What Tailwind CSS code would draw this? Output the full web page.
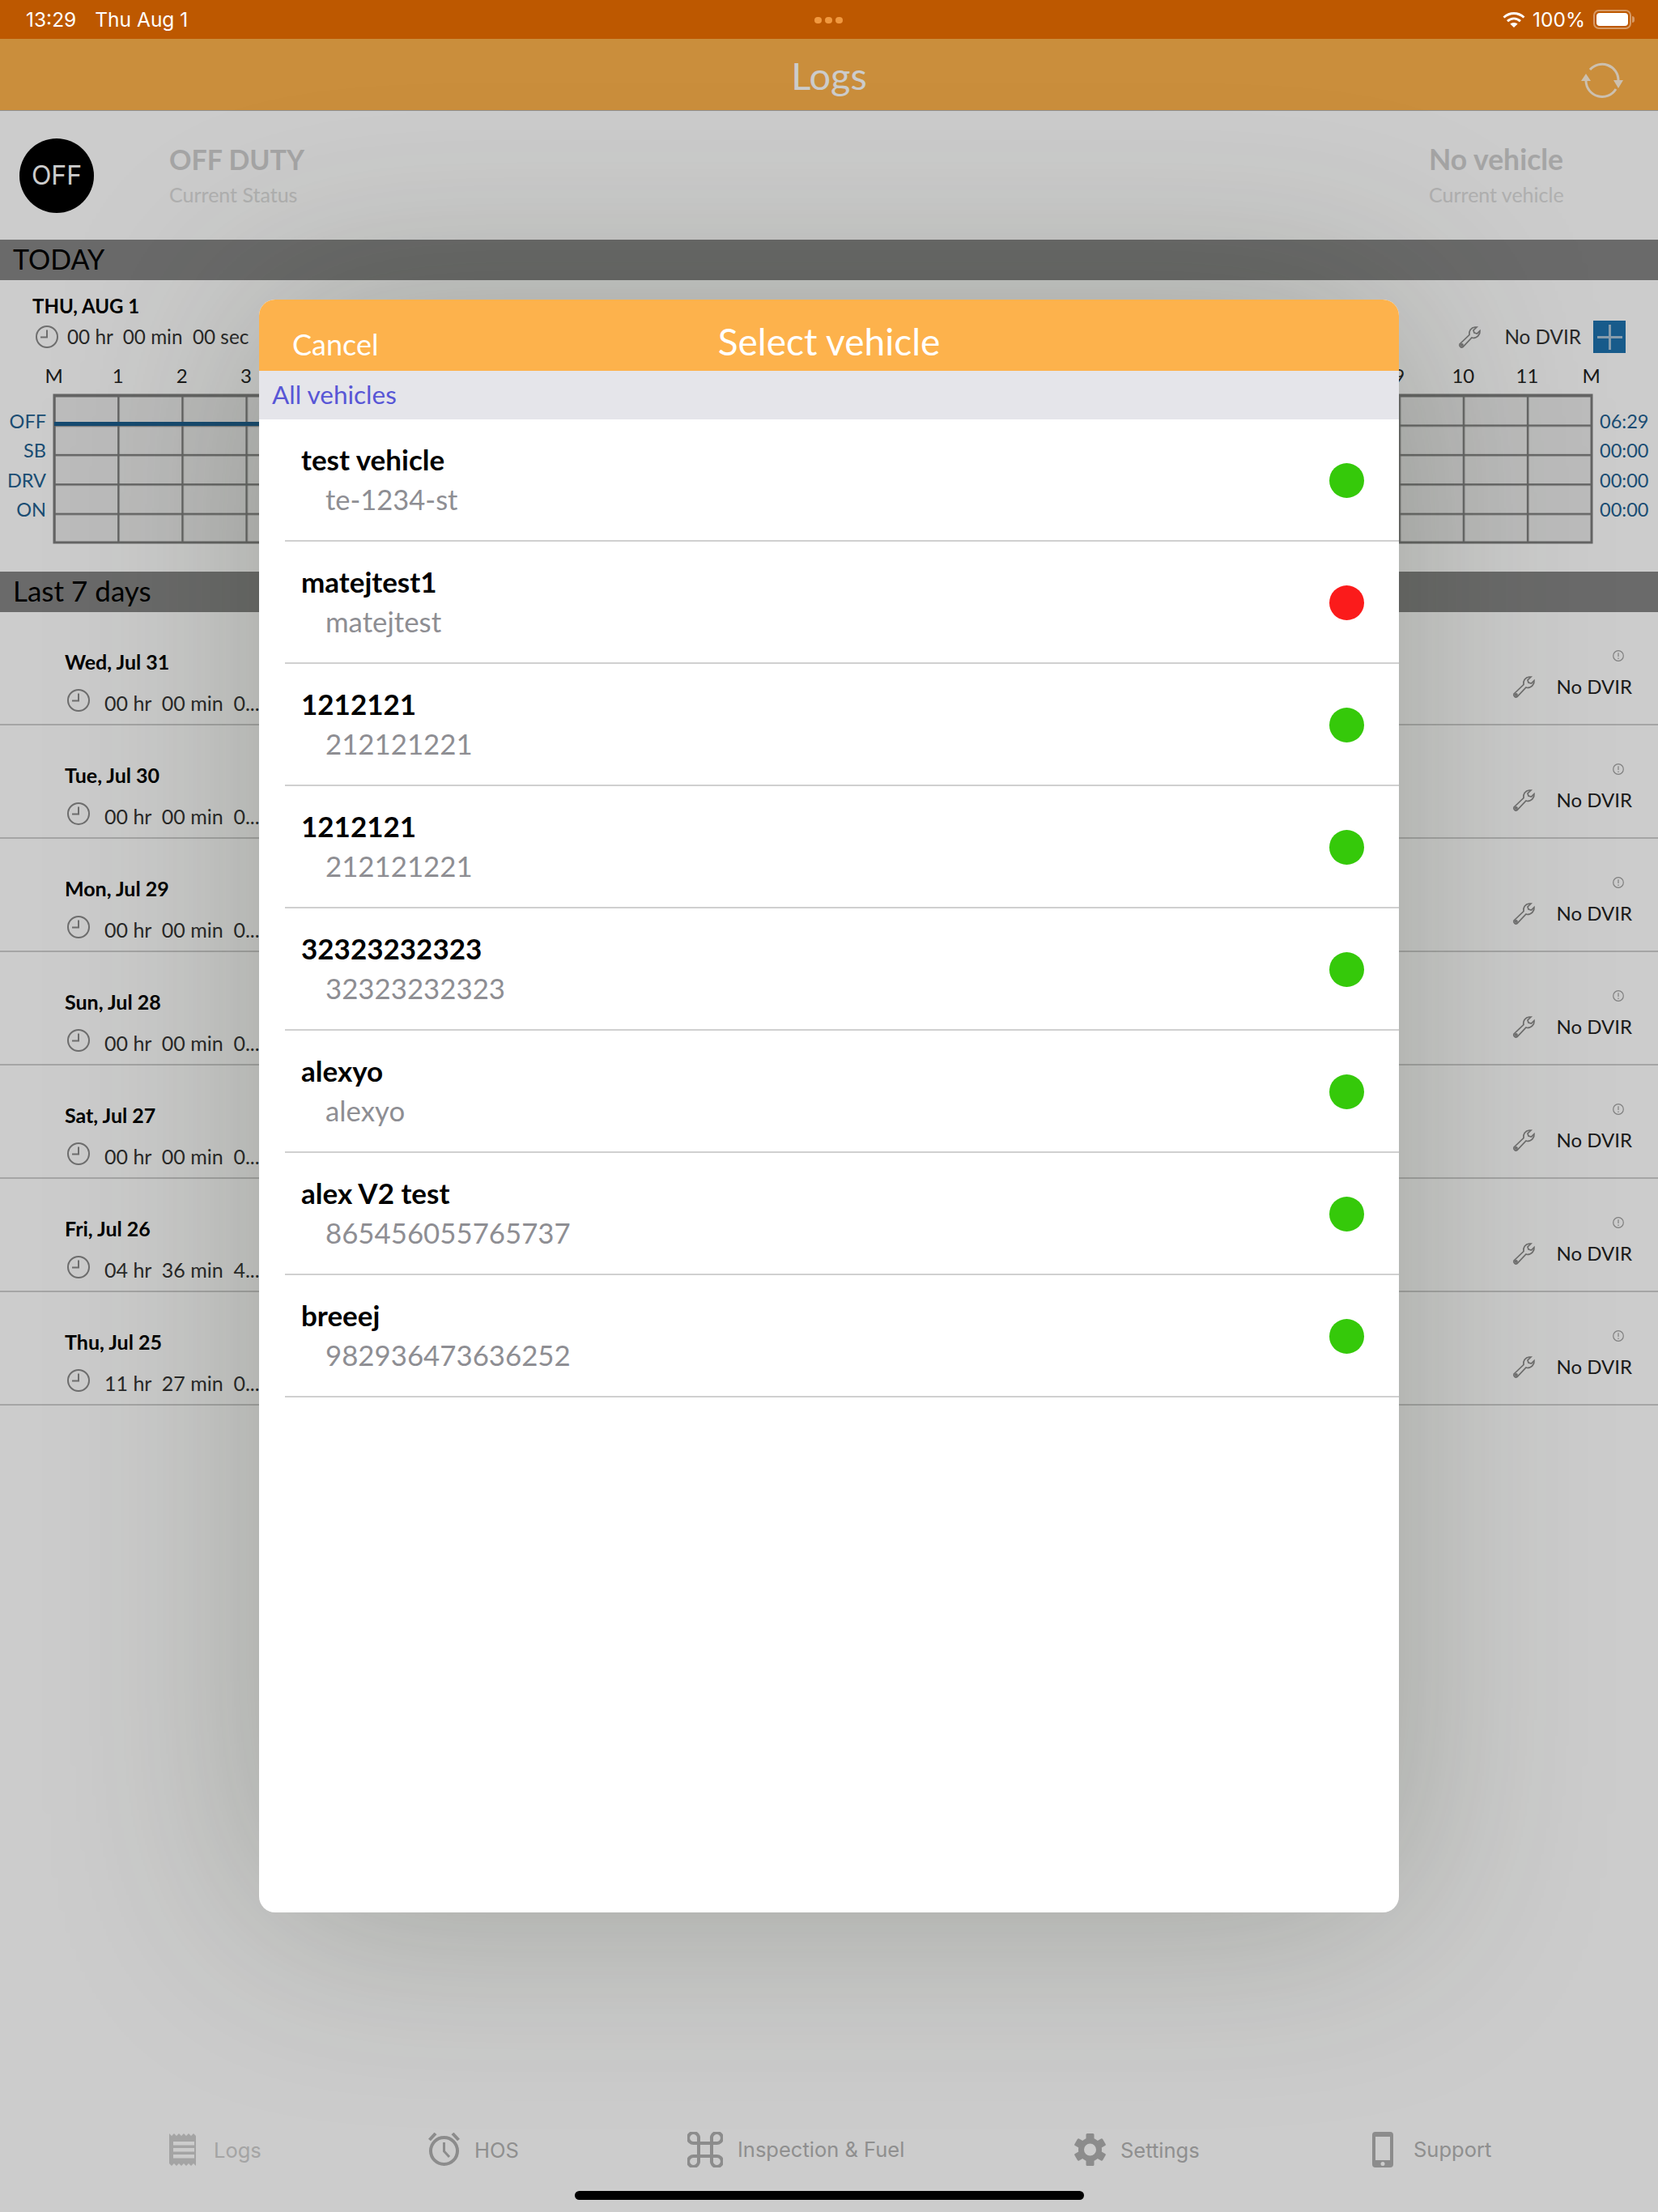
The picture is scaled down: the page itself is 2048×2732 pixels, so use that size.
<!DOCTYPE html>
<html>
<head>
<meta charset="utf-8">
<script src="https://cdn.jsdelivr.net/npm/@tailwindcss/browser@4"></script>
</head>
<body class="m-0">
<div class="relative w-[2048px] h-[2732px] overflow-hidden bg-white flex flex-col font-['Lato',sans-serif] text-black">

  <!-- status bar -->
  <div class="relative z-30 h-[48px] bg-[#bd5800] flex items-center text-white font-['Inter',sans-serif] text-[24.500px] pl-[32px] pr-[33px]">
    <span>13:29</span><span class="ml-[23px]">Thu Aug 1</span>
    <div class="absolute left-[1006px] top-[21px] flex gap-[4px]">
      <span class="w-[9px] h-[8px] rounded-full bg-[#f0983f]"></span><span class="w-[9px] h-[8px] rounded-full bg-[#f0983f]"></span><span class="w-[9px] h-[8px] rounded-full bg-[#f0983f]"></span>
    </div>
    <div class="ml-auto flex items-center">
      <svg width="28" height="20" viewBox="0 0 28 20" fill="none" stroke="white" stroke-width="3"><path d="M1.500 7.500C9 .8 19 .8 26.500 7.500"/><path d="M6 12.200c5-4.300 11-4.300 16 0"/><path d="M14 20l-4.600-4.600c2.800-2 6.400-2 9.200 0z" fill="white" stroke="none"/></svg>
      <span class="ml-[9px]">100%</span>
      <div class="ml-[10px] w-[47px] h-[24px] rounded-[7px] border-2 border-white/40 p-[2px] relative">
        <div class="w-full h-full bg-white rounded-[4px]"></div>
        <div class="absolute right-[-6px] top-[6px] w-[3px] h-[8px] rounded-r-full bg-white/40"></div>
      </div>
    </div>
  </div>

  <!-- nav -->
  <div class="relative h-[89px] bg-[#fdb24c] border-b border-b-[#b5b5b5] flex items-center justify-center">
    <span class="text-white text-[47px] mt-[2px]">Logs</span>
    <svg class="absolute left-[1953px] top-[29px]" width="52" height="44" viewBox="0 0 52 44" fill="none" stroke="white" stroke-opacity=".8" stroke-width="3">
      <path d="M11 9A20 20 0 0 1 46 22"/><path d="M6 23A20 20 0 0 0 43 33"/>
      <path d="M6 14L0 23H12Z M46 32L40 22H52Z" fill="white" fill-opacity=".8" stroke="none"/>
    </svg>
  </div>

  <!-- current status -->
  <div class="h-[159px] flex items-center pl-[24px]">
    <div class="w-[92px] h-[92px] rounded-full bg-black flex items-center justify-center text-white text-[32px] font-['Inter',sans-serif]">OFF</div>
    <div class="ml-[94px] -translate-x-px">
      <div class="text-[34px] leading-[42px] font-bold text-[#cfcfcf] -translate-y-px">OFF DUTY</div>
      <div class="text-[25px] leading-[34px] mt-[4px] text-[#dcdcdc]">Current Status</div>
    </div>
    <div class="ml-auto w-[283px]">
      <div class="text-[35.500px] leading-[42px] font-bold text-[#cfcfcf] -translate-y-px">No vehicle</div>
      <div class="text-[25px] leading-[34px] mt-[4px] text-[#dcdcdc]">Current vehicle</div>
    </div>
  </div>

  <!-- today header -->
  <div class="h-[50px] bg-[#858585] flex items-center pl-[16px] pb-[4px] text-[34px] text-black">TODAY</div>

  <!-- today -->
  <div class="h-[360px] flex flex-col">
    <div class="pl-[40px] pt-[19px] text-[24px] leading-[26px] font-bold">THU, AUG 1</div>
    <div class="mt-[5px] h-[40px] flex items-center pl-[43px] pr-[40px] text-[24.300px] text-[#333]">
      <svg width="30" height="30" viewBox="0 0 30 30" fill="none" stroke="#8a8a8a" stroke-width="2"><circle cx="15" cy="15" r="13"/><path d="M15 6.500V15.500H7"/></svg>
      <span class="ml-[10px] whitespace-pre">00 hr  00 min  00 sec</span>
      <svg class="ml-auto" width="30" height="30" viewBox="0 0 30 30" fill="none" stroke="#8a8a8a" stroke-width="1.700"><path d="M3 24L15 12.500C14 8 17 3.500 22 3L24 3L20 7L21 10L24.500 11L28 7.500C28.500 12 25 16.500 19.500 16.500L18 16L7 27.500C5 29 2 27 3 24Z"/><circle cx="5.800" cy="25" r="1.200"/></svg>
      <span class="ml-[28px]">No DVIR</span>
      <div class="ml-[15px] w-[40px] h-[40px] bg-[#1e72ae] relative flex items-center justify-center">
        <div class="absolute w-[31px] h-[3px] bg-[#a9c3d6]"></div><div class="absolute w-[3px] h-[31px] bg-[#a9c3d6]"></div>
      </div>
    </div>
    <div class="mt-[14px] h-[28px] flex items-center ml-[27px] text-[24px] text-[#222]">
      <span class="w-[79.125px] text-center">M</span><span class="w-[79.125px] text-center">1</span><span class="w-[79.125px] text-center">2</span><span class="w-[79.125px] text-center">3</span><span class="w-[1345.125px]"></span><span class="w-[79.125px] text-center">9</span><span class="w-[79.125px] text-center">10</span><span class="w-[79.125px] text-center">11</span><span class="w-[79.125px] text-center">M</span>
    </div>
    <div class="mt-[8px] flex items-start">
      <div class="w-[57px] pt-[16px] text-right text-[23.500px] leading-[36.400px] text-[#235f90]">
        <div>OFF</div><div>SB</div><div>DRV</div><div>ON</div>
      </div>
      <svg class="ml-[8px]" width="1903" height="186" viewBox="0 0 1903 186">
        <defs>
          <pattern id="cell" x="1" y="2" width="79.125" height="36.400" patternUnits="userSpaceOnUse">
            <rect width="79.125" height="36.400" fill="#ececec"/>
            <rect width="2.500" height="36.400" fill="#7e7e7e"/>
            <rect width="79.125" height="2.500" fill="#7e7e7e"/>
          </pattern>
        </defs>
        <rect x="2" y="2" width="1899" height="182" fill="url(#cell)" stroke="#7e7e7e" stroke-width="3"/>
        <rect x="2" y="35" width="620" height="5" fill="#1c5d8c"/>
      </svg>
      <div class="ml-[8px] pt-[16px] text-[23.500px] leading-[36.400px] text-[#235f90]">
        <div>06:29</div><div>00:00</div><div>00:00</div><div>00:00</div>
      </div>
    </div>
  </div>

  <!-- last 7 days header -->
  <div class="h-[50px] bg-[#858585] flex items-center pl-[16px] pb-[4px] text-[35px] text-black">Last 7 days</div>

  <!-- rows -->
  <div class="flex flex-col">
    <div class="h-[140px] border-b-2 border-b-[#cfcfcf] flex justify-between">
      <div class="pl-[80px] pt-[49px]"><div class="text-[25px] leading-[26px] font-bold -translate-y-px">Wed, Jul 31</div><div class="mt-[17px] flex items-center text-[25px] text-[#333]"><svg class="-translate-y-[3px] translate-x-[2px]" width="30" height="30" viewBox="0 0 30 30" fill="none" stroke="#8a8a8a" stroke-width="2"><circle cx="15" cy="15" r="13"/><path d="M15 6.500V15.500H7"/></svg><span class="ml-[19px] mt-[3px] -translate-y-[1.500px] whitespace-pre">00 hr  00 min  0...</span></div></div>
      <div class="pr-[32px] pt-[47px] flex flex-col items-end"><svg class="mr-[10px]" width="14" height="14" viewBox="0 0 14 14" fill="none" stroke="#a0a0a0" stroke-width="1.200"><circle cx="7" cy="7" r="6.300"/><path d="M7 3.200V8M7 9.500V11"/></svg><div class="mt-[13px] flex items-center text-[24px] text-[#222]"><svg width="30" height="30" viewBox="0 0 30 30" fill="none" stroke="#8a8a8a" stroke-width="1.700"><path d="M3 24L15 12.500C14 8 17 3.500 22 3L24 3L20 7L21 10L24.500 11L28 7.500C28.500 12 25 16.500 19.500 16.500L18 16L7 27.500C5 29 2 27 3 24Z"/><circle cx="5.800" cy="25" r="1.200"/></svg><span class="ml-[26px]">No DVIR</span></div></div>
    </div>
    <div class="h-[140px] border-b-2 border-b-[#cfcfcf] flex justify-between">
      <div class="pl-[80px] pt-[49px]"><div class="text-[25px] leading-[26px] font-bold -translate-y-px">Tue, Jul 30</div><div class="mt-[17px] flex items-center text-[25px] text-[#333]"><svg class="-translate-y-[3px] translate-x-[2px]" width="30" height="30" viewBox="0 0 30 30" fill="none" stroke="#8a8a8a" stroke-width="2"><circle cx="15" cy="15" r="13"/><path d="M15 6.500V15.500H7"/></svg><span class="ml-[19px] mt-[3px] -translate-y-[1.500px] whitespace-pre">00 hr  00 min  0...</span></div></div>
      <div class="pr-[32px] pt-[47px] flex flex-col items-end"><svg class="mr-[10px]" width="14" height="14" viewBox="0 0 14 14" fill="none" stroke="#a0a0a0" stroke-width="1.200"><circle cx="7" cy="7" r="6.300"/><path d="M7 3.200V8M7 9.500V11"/></svg><div class="mt-[13px] flex items-center text-[24px] text-[#222]"><svg width="30" height="30" viewBox="0 0 30 30" fill="none" stroke="#8a8a8a" stroke-width="1.700"><path d="M3 24L15 12.500C14 8 17 3.500 22 3L24 3L20 7L21 10L24.500 11L28 7.500C28.500 12 25 16.500 19.500 16.500L18 16L7 27.500C5 29 2 27 3 24Z"/><circle cx="5.800" cy="25" r="1.200"/></svg><span class="ml-[26px]">No DVIR</span></div></div>
    </div>
    <div class="h-[140px] border-b-2 border-b-[#cfcfcf] flex justify-between">
      <div class="pl-[80px] pt-[49px]"><div class="text-[25px] leading-[26px] font-bold -translate-y-px">Mon, Jul 29</div><div class="mt-[17px] flex items-center text-[25px] text-[#333]"><svg class="-translate-y-[3px] translate-x-[2px]" width="30" height="30" viewBox="0 0 30 30" fill="none" stroke="#8a8a8a" stroke-width="2"><circle cx="15" cy="15" r="13"/><path d="M15 6.500V15.500H7"/></svg><span class="ml-[19px] mt-[3px] -translate-y-[1.500px] whitespace-pre">00 hr  00 min  0...</span></div></div>
      <div class="pr-[32px] pt-[47px] flex flex-col items-end"><svg class="mr-[10px]" width="14" height="14" viewBox="0 0 14 14" fill="none" stroke="#a0a0a0" stroke-width="1.200"><circle cx="7" cy="7" r="6.300"/><path d="M7 3.200V8M7 9.500V11"/></svg><div class="mt-[13px] flex items-center text-[24px] text-[#222]"><svg width="30" height="30" viewBox="0 0 30 30" fill="none" stroke="#8a8a8a" stroke-width="1.700"><path d="M3 24L15 12.500C14 8 17 3.500 22 3L24 3L20 7L21 10L24.500 11L28 7.500C28.500 12 25 16.500 19.500 16.500L18 16L7 27.500C5 29 2 27 3 24Z"/><circle cx="5.800" cy="25" r="1.200"/></svg><span class="ml-[26px]">No DVIR</span></div></div>
    </div>
    <div class="h-[140px] border-b-2 border-b-[#cfcfcf] flex justify-between">
      <div class="pl-[80px] pt-[49px]"><div class="text-[25px] leading-[26px] font-bold -translate-y-px">Sun, Jul 28</div><div class="mt-[17px] flex items-center text-[25px] text-[#333]"><svg class="-translate-y-[3px] translate-x-[2px]" width="30" height="30" viewBox="0 0 30 30" fill="none" stroke="#8a8a8a" stroke-width="2"><circle cx="15" cy="15" r="13"/><path d="M15 6.500V15.500H7"/></svg><span class="ml-[19px] mt-[3px] -translate-y-[1.500px] whitespace-pre">00 hr  00 min  0...</span></div></div>
      <div class="pr-[32px] pt-[47px] flex flex-col items-end"><svg class="mr-[10px]" width="14" height="14" viewBox="0 0 14 14" fill="none" stroke="#a0a0a0" stroke-width="1.200"><circle cx="7" cy="7" r="6.300"/><path d="M7 3.200V8M7 9.500V11"/></svg><div class="mt-[13px] flex items-center text-[24px] text-[#222]"><svg width="30" height="30" viewBox="0 0 30 30" fill="none" stroke="#8a8a8a" stroke-width="1.700"><path d="M3 24L15 12.500C14 8 17 3.500 22 3L24 3L20 7L21 10L24.500 11L28 7.500C28.500 12 25 16.500 19.500 16.500L18 16L7 27.500C5 29 2 27 3 24Z"/><circle cx="5.800" cy="25" r="1.200"/></svg><span class="ml-[26px]">No DVIR</span></div></div>
    </div>
    <div class="h-[140px] border-b-2 border-b-[#cfcfcf] flex justify-between">
      <div class="pl-[80px] pt-[49px]"><div class="text-[25px] leading-[26px] font-bold -translate-y-px">Sat, Jul 27</div><div class="mt-[17px] flex items-center text-[25px] text-[#333]"><svg class="-translate-y-[3px] translate-x-[2px]" width="30" height="30" viewBox="0 0 30 30" fill="none" stroke="#8a8a8a" stroke-width="2"><circle cx="15" cy="15" r="13"/><path d="M15 6.500V15.500H7"/></svg><span class="ml-[19px] mt-[3px] -translate-y-[1.500px] whitespace-pre">00 hr  00 min  0...</span></div></div>
      <div class="pr-[32px] pt-[47px] flex flex-col items-end"><svg class="mr-[10px]" width="14" height="14" viewBox="0 0 14 14" fill="none" stroke="#a0a0a0" stroke-width="1.200"><circle cx="7" cy="7" r="6.300"/><path d="M7 3.200V8M7 9.500V11"/></svg><div class="mt-[13px] flex items-center text-[24px] text-[#222]"><svg width="30" height="30" viewBox="0 0 30 30" fill="none" stroke="#8a8a8a" stroke-width="1.700"><path d="M3 24L15 12.500C14 8 17 3.500 22 3L24 3L20 7L21 10L24.500 11L28 7.500C28.500 12 25 16.500 19.500 16.500L18 16L7 27.500C5 29 2 27 3 24Z"/><circle cx="5.800" cy="25" r="1.200"/></svg><span class="ml-[26px]">No DVIR</span></div></div>
    </div>
    <div class="h-[140px] border-b-2 border-b-[#cfcfcf] flex justify-between">
      <div class="pl-[80px] pt-[49px]"><div class="text-[25px] leading-[26px] font-bold -translate-y-px">Fri, Jul 26</div><div class="mt-[17px] flex items-center text-[25px] text-[#333]"><svg class="-translate-y-[3px] translate-x-[2px]" width="30" height="30" viewBox="0 0 30 30" fill="none" stroke="#8a8a8a" stroke-width="2"><circle cx="15" cy="15" r="13"/><path d="M15 6.500V15.500H7"/></svg><span class="ml-[19px] mt-[3px] -translate-y-[1.500px] whitespace-pre">04 hr  36 min  4...</span></div></div>
      <div class="pr-[32px] pt-[47px] flex flex-col items-end"><svg class="mr-[10px]" width="14" height="14" viewBox="0 0 14 14" fill="none" stroke="#a0a0a0" stroke-width="1.200"><circle cx="7" cy="7" r="6.300"/><path d="M7 3.200V8M7 9.500V11"/></svg><div class="mt-[13px] flex items-center text-[24px] text-[#222]"><svg width="30" height="30" viewBox="0 0 30 30" fill="none" stroke="#8a8a8a" stroke-width="1.700"><path d="M3 24L15 12.500C14 8 17 3.500 22 3L24 3L20 7L21 10L24.500 11L28 7.500C28.500 12 25 16.500 19.500 16.500L18 16L7 27.500C5 29 2 27 3 24Z"/><circle cx="5.800" cy="25" r="1.200"/></svg><span class="ml-[26px]">No DVIR</span></div></div>
    </div>
    <div class="h-[140px] border-b-2 border-b-[#cfcfcf] flex justify-between">
      <div class="pl-[80px] pt-[49px]"><div class="text-[25px] leading-[26px] font-bold -translate-y-px">Thu, Jul 25</div><div class="mt-[17px] flex items-center text-[25px] text-[#333]"><svg class="-translate-y-[3px] translate-x-[2px]" width="30" height="30" viewBox="0 0 30 30" fill="none" stroke="#8a8a8a" stroke-width="2"><circle cx="15" cy="15" r="13"/><path d="M15 6.500V15.500H7"/></svg><span class="ml-[19px] mt-[3px] -translate-y-[1.500px] whitespace-pre">11 hr  27 min  0...</span></div></div>
      <div class="pr-[32px] pt-[47px] flex flex-col items-end"><svg class="mr-[10px]" width="14" height="14" viewBox="0 0 14 14" fill="none" stroke="#a0a0a0" stroke-width="1.200"><circle cx="7" cy="7" r="6.300"/><path d="M7 3.200V8M7 9.500V11"/></svg><div class="mt-[13px] flex items-center text-[24px] text-[#222]"><svg width="30" height="30" viewBox="0 0 30 30" fill="none" stroke="#8a8a8a" stroke-width="1.700"><path d="M3 24L15 12.500C14 8 17 3.500 22 3L24 3L20 7L21 10L24.500 11L28 7.500C28.500 12 25 16.500 19.500 16.500L18 16L7 27.500C5 29 2 27 3 24Z"/><circle cx="5.800" cy="25" r="1.200"/></svg><span class="ml-[26px]">No DVIR</span></div></div>
    </div>
  </div>

  <!-- tab bar -->
  <div class="mt-auto h-[101px] pb-[54px] pl-[209px] flex items-center font-['Inter',sans-serif] text-[25.500px] text-[#b3b3b3]">
    <div class="w-[320px] flex items-center text-[#cecece]">
      <svg width="36" height="40" viewBox="0 0 36 40"><path fill="#cecece" d="M0 0l3 3 3-3 3 3 3-3 3 3 3-3 3 3 3-3 3 3 3-3 3 3 0 0V40l-3-3-3 3-3-3-3 3-3-3-3 3-3-3-3 3-3-3-3 3-3-3z"/><rect x="5" y="10" width="26" height="4.500" fill="white"/><rect x="5" y="18" width="26" height="4.500" fill="white"/><rect x="5" y="26" width="26" height="4.500" fill="white"/></svg>
      <span class="ml-[19px] mt-[3px]">Logs</span>
    </div>
    <div class="w-[320px] flex items-center">
      <svg width="39" height="41" viewBox="0 0 39 41" fill="none" stroke="#afafaf"><circle cx="19.500" cy="22.500" r="16.500" stroke-width="4"/><path d="M19.500 12V23L26 30" stroke-width="3"/><path d="M1.500 9L9 1M30 1L37.500 9" stroke-width="4"/></svg>
      <span class="ml-[18px] mt-[3px]">HOS</span>
    </div>
    <div class="w-[478px] flex items-center">
      <svg width="44" height="44" viewBox="0 0 44 44" fill="none" stroke="#afafaf" stroke-width="4"><path d="M14 14H30V30H14ZM14 14V8.500A6.500 6.500 0 1 0 8 14H14M30 14V8.500A6.500 6.500 0 1 1 36 14H30M14 30V35.500A6.500 6.500 0 1 1 8 30H14M30 30V35.500A6.500 6.500 0 1 0 36 30H30"/></svg>
      <span class="ml-[18px] mt-[1px]">Inspection &amp; Fuel</span>
    </div>
    <div class="w-[368px] flex items-center">
      <svg width="39" height="40" viewBox="0 0 39 40"><g fill="#afafaf"><circle cx="19.500" cy="20" r="14.500"/><rect x="14.500" y="0" width="10" height="40" rx="1.500"/><rect x="14.500" y="0" width="10" height="40" rx="1.500" transform="rotate(60 19.500 20)"/><rect x="14.500" y="0" width="10" height="40" rx="1.500" transform="rotate(120 19.500 20)"/></g><circle cx="19.500" cy="20" r="7.500" fill="white"/></svg>
      <span class="ml-[18px] mt-[3px]">Settings</span>
    </div>
    <div class="flex items-center">
      <svg width="26" height="44" viewBox="0 0 26 44"><rect width="26" height="44" rx="4" fill="#afafaf"/><rect x="4" y="6" width="18" height="29" fill="white"/><circle cx="13" cy="39.500" r="2.500" fill="white"/></svg>
      <span class="ml-[25px] mt-[1px]">Support</span>
    </div>
  </div>

  <!-- dim overlay -->
  <div class="absolute inset-0 z-10 bg-black/20"></div>

  <!-- home indicator -->
  <div class="absolute z-30 left-[710px] top-[2706px] w-[629px] h-[11px] rounded-full bg-black"></div>

  <!-- modal -->
  <div class="absolute z-20 left-[320px] top-[370px] w-[1408px] h-[1992px] bg-white rounded-[20px] overflow-hidden flex flex-col">
    <div class="h-[88px] bg-[#fdb24c] relative flex items-center justify-center text-white">
      <span class="absolute left-[41px] top-[35px] text-[36px] leading-[40px]">Cancel</span>
      <span class="mt-[16px] text-[46px] leading-[50px]">Select vehicle</span>
    </div>
    <div class="h-[60px] bg-[#e5e5ea] flex items-center pl-[16px] text-[31.500px] text-[#5856d6]">All vehicles</div>
    <div class="flex flex-col pl-[32px]">
      <div class="h-[151px] border-b-2 border-b-[#d0d0d0] flex items-center pr-[43px]"><div class="flex-1 pl-[20px]"><div class="text-[35px] leading-[40px] font-bold -translate-y-px">test vehicle</div><div class="text-[34.500px] leading-[40px] mt-[9px] pl-[30px] text-[#8e8e93]">te-1234-st</div></div><div class="mt-[2px] w-[43px] h-[43px] rounded-full bg-[#35c90a]"></div></div>
      <div class="h-[151px] border-b-2 border-b-[#d0d0d0] flex items-center pr-[43px]"><div class="flex-1 pl-[20px]"><div class="text-[35px] leading-[40px] font-bold -translate-y-px">matejtest1</div><div class="text-[34.800px] leading-[40px] mt-[9px] pl-[30px] text-[#8e8e93]">matejtest</div></div><div class="mt-[2px] w-[43px] h-[43px] rounded-full bg-[#fb1b1b]"></div></div>
      <div class="h-[151px] border-b-2 border-b-[#d0d0d0] flex items-center pr-[43px]"><div class="flex-1 pl-[20px]"><div class="text-[35px] leading-[40px] font-bold -translate-y-px">1212121</div><div class="text-[34.800px] leading-[40px] mt-[9px] pl-[30px] text-[#8e8e93]">212121221</div></div><div class="mt-[2px] w-[43px] h-[43px] rounded-full bg-[#35c90a]"></div></div>
      <div class="h-[151px] border-b-2 border-b-[#d0d0d0] flex items-center pr-[43px]"><div class="flex-1 pl-[20px]"><div class="text-[35px] leading-[40px] font-bold -translate-y-px">1212121</div><div class="text-[34.800px] leading-[40px] mt-[9px] pl-[30px] text-[#8e8e93]">212121221</div></div><div class="mt-[2px] w-[43px] h-[43px] rounded-full bg-[#35c90a]"></div></div>
      <div class="h-[151px] border-b-2 border-b-[#d0d0d0] flex items-center pr-[43px]"><div class="flex-1 pl-[20px]"><div class="text-[35px] leading-[40px] font-bold -translate-y-px">32323232323</div><div class="text-[34.800px] leading-[40px] mt-[9px] pl-[30px] text-[#8e8e93]">32323232323</div></div><div class="mt-[2px] w-[43px] h-[43px] rounded-full bg-[#35c90a]"></div></div>
      <div class="h-[151px] border-b-2 border-b-[#d0d0d0] flex items-center pr-[43px]"><div class="flex-1 pl-[20px]"><div class="text-[35px] leading-[40px] font-bold -translate-y-px">alexyo</div><div class="text-[34.800px] leading-[40px] mt-[9px] pl-[30px] text-[#8e8e93]">alexyo</div></div><div class="mt-[2px] w-[43px] h-[43px] rounded-full bg-[#35c90a]"></div></div>
      <div class="h-[151px] border-b-2 border-b-[#d0d0d0] flex items-center pr-[43px]"><div class="flex-1 pl-[20px]"><div class="text-[35px] leading-[40px] font-bold -translate-y-px">alex V2 test</div><div class="text-[34.800px] leading-[40px] mt-[9px] pl-[30px] text-[#8e8e93]">865456055765737</div></div><div class="mt-[2px] w-[43px] h-[43px] rounded-full bg-[#35c90a]"></div></div>
      <div class="h-[151px] border-b-2 border-b-[#d0d0d0] flex items-center pr-[43px]"><div class="flex-1 pl-[20px]"><div class="text-[35px] leading-[40px] font-bold -translate-y-px">breeej</div><div class="text-[34.800px] leading-[40px] mt-[9px] pl-[30px] text-[#8e8e93]">982936473636252</div></div><div class="mt-[2px] w-[43px] h-[43px] rounded-full bg-[#35c90a]"></div></div>
    </div>
  </div>
  <!-- modal shadow -->
  <div class="absolute z-10 left-[320px] top-[370px] w-[1408px] h-[1992px] rounded-[20px] shadow-[0_0_420px_rgba(40,50,30,0.27)]"></div>
</div>
</body>
</html>
